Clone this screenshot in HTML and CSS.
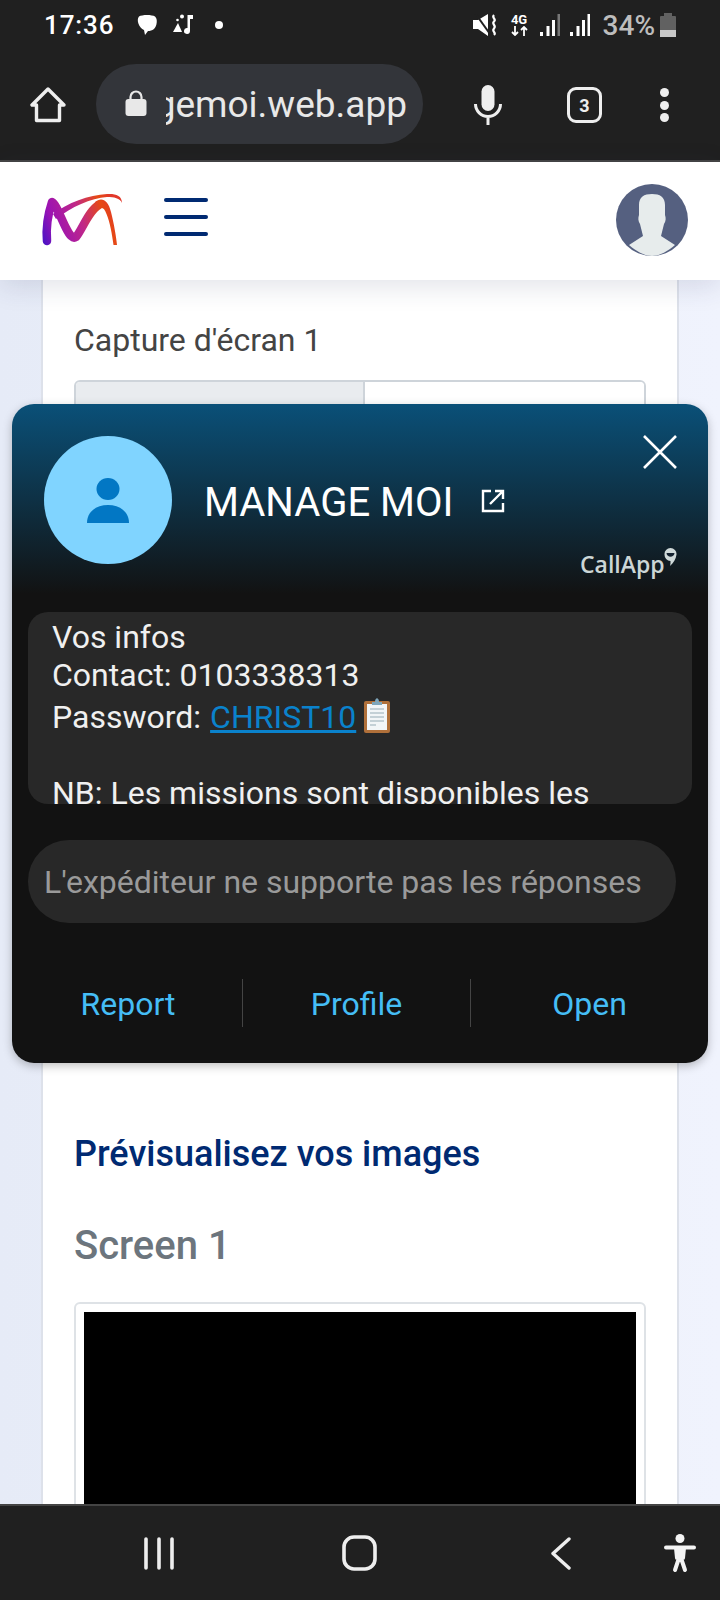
FILE: index.html
```html
<!DOCTYPE html>
<html lang="fr">
<head>
<meta charset="utf-8">
<title>Manage Moi</title>
<link rel="stylesheet" href="styles.css">
</head>
<body>
<div class="screen">
  <div class="chrome-top">
    <div class="status">
      <div class="status-left">
        <span class="time">17:36</span>
        <svg class="ic-msg" viewBox="0 0 22 22"><path d="M3 2.500C6 .5 16 .5 19 2.500 22 5 21 12 18 15c-2 1.500-4 2-6 2l-3 4-1-5C3 14 0 6 3 2.500Z" fill="#fff"/></svg>
        <svg class="ic-music" viewBox="0 0 21 22"><path d="M1 18l5-9 4 9z" fill="#fff"/><circle cx="10" cy="2.500" r="2" fill="#fff"/><circle cx="5.500" cy="6" r="1.300" fill="#fff"/><path d="M15.500 1H21v4h-3v12a3 3 0 1 1-2.500-3z" fill="#fff"/></svg>
        <span class="dot"></span>
      </div>
      <div class="status-right">
        <svg class="ic-mute" viewBox="0 0 25 22"><path d="M0 6h5L15 0v22L5 15H0z" fill="#fff"/><path d="M2-1 17 20" stroke="#202020" stroke-width="2" fill="none"/><path d="M21 1c-3 3 3 4 0 6.500s3 4 0 7 3 4 0 6.500" fill="none" stroke="#fff" stroke-width="2.200"/></svg>
        <div class="net"><span class="net-label">4G</span><svg class="net-arrows" viewBox="0 0 17 10"><path d="M4 0v9M1 6l3 3 3-3M13 10V1M10 4l3-3 3 3" fill="none" stroke="#fff" stroke-width="1.800"/></svg></div>
        <svg class="ic-signal" viewBox="0 0 21 22"><path d="M1 18h3v4H1zM7.500 12h3v10h-3zM13 6h3v16h-3z" fill="#fff"/><path d="M18.500 0H21v22h-2.500z" fill="#777"/></svg>
        <svg class="ic-signal" viewBox="0 0 21 22"><path d="M1 18h3v4H1zM7.500 12h3v10h-3zM13 6h3v16h-3zM18.500 0H21v22h-2.500z" fill="#fff"/></svg>
        <span class="pct">34%</span>
        <div class="battery"><span class="battery-cap"></span><span class="battery-body"></span><span class="battery-fill"></span></div>
      </div>
    </div>
    <div class="toolbar">
      <svg class="ic-home" viewBox="0 0 36 36"><path d="M18 2 2 18h4.500v15.500h23V18H34z" fill="none" stroke="#eee" stroke-width="3.400" stroke-linejoin="round"/></svg>
      <div class="omnibox">
        <svg class="ic-lock" viewBox="0 0 22 26"><path d="M5.500 11V7a5.500 5.500 0 0 1 11 0v4" fill="none" stroke="#e8e8e8" stroke-width="2.200"/><rect x="0.500" y="9" width="21" height="17" rx="3" fill="#e8e8e8"/></svg>
        <div class="url"><span>managemoi.web.app</span></div>
      </div>
      <svg class="ic-mic" viewBox="0 0 28 40"><rect x="7.500" y="0" width="13" height="26" rx="6.500" fill="#eee"/><path d="M1.500 19a12.500 12.500 0 0 0 25 0M14 31v9" fill="none" stroke="#eee" stroke-width="3"/></svg>
      <div class="tabs">3</div>
      <div class="menu"><span></span><span></span><span></span></div>
    </div>
  </div>

  <header class="site-header">
    <svg class="logo" viewBox="0 0 84 60">
      <defs>
        <linearGradient id="lg" gradientUnits="userSpaceOnUse" x1="4" y1="50" x2="78" y2="22">
          <stop offset="0" stop-color="#4a14c4"/>
          <stop offset=".2" stop-color="#9a12b4"/>
          <stop offset=".55" stop-color="#c02888"/>
          <stop offset=".85" stop-color="#e64a14"/>
          <stop offset="1" stop-color="#e2382a"/>
        </linearGradient>
      </defs>
      <path d="M8 49C7 38 9 22 13 10 17 12 21 24 27 36 31 44 34 47 37 45 43 38 50 18 60 13" fill="none" stroke="url(#lg)" stroke-width="8.500" stroke-linecap="round" stroke-linejoin="round"/>
      <path d="M56 10C62 5 69 7 72 20 75 32 77 44 78 53H74.500C73 42 71 30 67.500 22 65 15 62 15 58 18Z" fill="url(#lg)"/>
      <path d="M14 22C28 11 50 3 68 2 76 1.500 83 3 83 11 81 6 75 5 68 5 52 6 32 15 17 27Z" fill="url(#lg)"/>
    </svg>
    <div class="burger"><span></span><span></span><span></span></div>
    <svg class="profile" viewBox="0 0 72 72"><circle cx="36" cy="36" r="36" fill="#556080"/><path d="M36 10c8 0 13 3 13 11v10c1 3 1 6-1 9l-3 12 14 9C52 67 44 72 36 72S20 67 13 61l14-9-3-12c-2-3-2-6-1-9V21c0-8 5-11 13-11z" fill="#e7ecec"/></svg>
  </header>

  <main class="page">
    <section class="card">
      <label class="field-label">Capture d'écran 1</label>
      <div class="file-input"><span class="file-btn"></span><span class="file-name"></span></div>
      <h2 class="preview-title">Prévisualisez vos images</h2>
      <h3 class="screen-title">Screen 1</h3>
      <div class="thumb"><div class="thumb-img"></div></div>
    </section>
  </main>

  <nav class="chrome-bottom">
    <svg class="ic-recents" viewBox="0 0 31 33"><path d="M2.500 2v29M15.500 2v29M28.500 2v29" stroke="#eee" stroke-width="3.600" stroke-linecap="round"/></svg>
    <svg class="ic-square" viewBox="0 0 35 36"><rect x="2" y="2" width="31" height="32" rx="10" fill="none" stroke="#eee" stroke-width="3.600"/></svg>
    <svg class="ic-back" viewBox="0 0 20 33"><path d="M18 2 2 16.500 18 31" fill="none" stroke="#eee" stroke-width="3.400" stroke-linecap="round" stroke-linejoin="round"/></svg>
    <svg class="ic-access" viewBox="0 0 32 39"><circle cx="16" cy="4.500" r="4.500" fill="#f4f4f4"/><path d="M2 13.500h28M16 13.500v9M16 21l-5 15M16 21l5 15M12 14l1 10M20 14l-1 10" fill="none" stroke="#f4f4f4" stroke-width="4" stroke-linecap="round"/></svg>
  </nav>

  <aside class="popup">
    <div class="popup-head">
      <div class="caller-photo">
        <svg viewBox="0 0 42 45"><ellipse cx="21" cy="11" rx="11.500" ry="11" fill="#0277c4"/><path d="M0 45c0-11 9-18 21-18s21 7 21 18z" fill="#0277c4"/></svg>
      </div>
      <div class="caller-name">MANAGE MOI</div>
      <svg class="ic-ext" viewBox="0 0 24 24"><path d="M10 2H2v20h20v-8M22 10V2h-8M22 2 9 15" fill="none" stroke="#fff" stroke-width="2.400"/></svg>
      <svg class="ic-close" viewBox="0 0 34 34"><path d="M1 1l32 32M33 1 1 33" stroke="#fff" stroke-width="2.600"/></svg>
      <div class="brand"><span class="brand-name">CallApp</span>
        <svg class="brand-mark" viewBox="0 0 13 18"><path d="M6.500 0a6 6 0 0 1 6 6.500C12 11 9.500 15 6 18c.5-1.500.5-3 .5-5A6.200 6.200 0 0 1 .5 6.500 6 6 0 0 1 6.500 0Z" fill="#d0dada"/><path d="M2.500 5h8C10 10 3 10 2.500 5z" fill="#142230"/></svg>
      </div>
    </div>
    <div class="message">
      <p class="msg-line">Vos infos</p>
      <p class="msg-line">Contact: 0103338313</p>
      <p class="msg-line msg-pass">Password: <a class="msg-link">CHRIST10</a><svg class="ic-clip" viewBox="0 0 26 35"><rect x="0" y="3" width="26" height="32" rx="2" fill="#b0703a"/><rect x="3" y="6" width="20" height="26" fill="#f2f5f7"/><path d="M6 11h14M6 15h14M6 19h14M6 23h14M6 27h6" stroke="#b5c4cc" stroke-width="1.300"/><path d="M8 7V4h3c0-5 4-5 4 0h3v3z" fill="#7ea6bb"/></svg></p>
      <p class="msg-line msg-blank">&nbsp;</p>
      <p class="msg-line">NB: Les missions sont disponibles les</p>
    </div>
    <div class="reply">L'expéditeur ne supporte pas les réponses</div>
    <div class="actions">
      <span class="action">Report</span>
      <span class="action action-mid">Profile</span>
      <span class="action">Open</span>
    </div>
  </aside>
</div>
</body>
</html>
```
FILE: styles.css
```css
* { box-sizing: border-box; margin: 0; padding: 0; }
html, body { width: 720px; height: 1600px; overflow: hidden; }
body { font-family: Roboto, "Liberation Sans", sans-serif; background: #202020; }
.screen { position: relative; width: 720px; height: 1600px; display: flex; flex-direction: column; overflow: hidden; }

.chrome-top { height: 162px; flex: none; background: #202020; border-bottom: 2px solid #444; }
.status { height: 50px; display: flex; justify-content: space-between; align-items: center; padding: 0 44px 0 45px; }
.status-left, .status-right { display: flex; align-items: center; }
.time { color: #fff; font-size: 26px; letter-spacing: .9px; font-weight: 500; width: 91px; margin-left: -1px; }
.ic-msg { width: 22px; height: 22px; margin-left: 1px; }
.ic-music { width: 21px; height: 22px; margin-left: 14px; }
.dot { width: 8px; height: 8px; border-radius: 50%; background: #fff; margin-left: 22px; }
.ic-mute { width: 25px; height: 22px; margin-right: 13px; }
.net { width: 17px; height: 22px; color: #fff; font-weight: 700; display: flex; flex-direction: column; align-items: center; margin-right: 11px; }
.net-label { font-size: 13px; line-height: 12px; }
.net-arrows { width: 17px; height: 10px; }
.ic-signal { width: 21px; height: 22px; margin-right: 9px; }
.pct { color: #bdbdbd; font-size: 28px; font-weight: 500; margin: 0 5px 0 4px; }
.battery { position: relative; width: 16px; height: 24px; }
.battery-cap { position: absolute; left: 4px; top: 0; width: 8px; height: 3px; background: #616161; }
.battery-body { position: absolute; left: 0; top: 3px; width: 16px; height: 21px; background: #616161; border-radius: 1px; }
.battery-fill { position: absolute; left: 0; top: 17px; width: 16px; height: 7px; background: #c8c8c8; }

.toolbar { height: 110px; display: flex; align-items: center; padding: 0 0 0 30px; }
.ic-home { width: 36px; height: 36px; margin-right: 30px; }
.omnibox { width: 327px; height: 80px; border-radius: 40px; background: #33353a; display: flex; align-items: center; padding-left: 29px; margin-right: 51px; margin-top: -2px; }
.ic-lock { width: 22px; height: 26px; flex: none; margin-top: -2px; }
.url { width: 241px; margin-left: 19px; overflow: hidden; display: flex; justify-content: flex-end; white-space: nowrap; color: #e8e8e8; font-size: 37px; }
.ic-mic { width: 28px; height: 40px; margin-right: 65px; }
.tabs { width: 35px; height: 36px; border: 3.500px solid #eee; border-radius: 9px; color: #eee; font-size: 18px; font-weight: 700; display: flex; align-items: center; justify-content: center; margin-right: 58px; }
.menu { display: flex; flex-direction: column; gap: 3.500px; }
.menu span { width: 9px; height: 9px; border-radius: 50%; background: #eee; }

.site-header { height: 118px; flex: none; background: #fff; display: flex; align-items: center; padding: 0 32px 0 39px; position: relative; z-index: 2; box-shadow: 0 6px 26px rgba(40,50,90,.14); }
.logo { width: 84px; height: 60px; margin-top: 2px; }
.burger { display: flex; flex-direction: column; gap: 13.500px; margin: -8px 0 0 41px; }
.burger span { display: block; width: 44px; height: 3.500px; border-radius: 2px; background: #002a72; }
.profile { width: 72px; height: 72px; margin: -2px 0 0 auto; }

.page { flex: 1; min-height: 0; background: linear-gradient(90deg, #e6ebf7, #f0f3fd); padding: 0 41px; overflow: hidden; }
.card { background: #fff; border: solid #dde1ea; border-width: 0 2px; height: 100%; padding: 44px 31px 0; }
.field-label { display: block; font-size: 32px; line-height: 32px; color: #444; }
.file-input { display: flex; height: 100px; margin-top: 24px; border: 2px solid #ced4da; border-radius: 6px; overflow: hidden; }
.file-btn { width: 289px; background: #e9ecef; border-right: 2px solid #ced4da; }
.file-name { flex: 1; background: #fff; }
.preview-title { margin-top: 654px; font-size: 36px; line-height: 40px; font-weight: 500; color: #002a72; }
.screen-title { margin-top: 49px; font-size: 40px; line-height: 46px; font-weight: 500; color: #6c757d; }
.thumb { margin-top: 33px; height: 300px; border: 2px solid #dee2e6; border-radius: 6px; padding: 8px 8px 0; }
.thumb-img { height: 100%; background: #000; }

.chrome-bottom { height: 96px; flex: none; position: relative; z-index: 2; background: #202020; border-top: 2px solid #444; display: flex; align-items: center; padding: 0 24px 0 143px; }
.ic-recents { width: 32px; height: 33px; margin-right: 167px; }
.ic-square { width: 35px; height: 36px; margin-right: 174px; }
.ic-back { width: 20px; height: 33px; margin-right: 93px; }
.ic-access { width: 32px; height: 39px; }

.popup { position: absolute; z-index: 3; left: 12px; top: 404px; width: 696px; height: 659px; border-radius: 22px; background: linear-gradient(#0a5078 0, #121212 190px); box-shadow: 0 3px 10px rgba(0,0,0,.25); color: #fff; display: flex; flex-direction: column; }
.popup-head { position: relative; height: 208px; flex: none; display: flex; align-items: center; padding: 0 0 0 32px; }
.caller-photo { width: 128px; height: 128px; margin-top: -16px; border-radius: 50%; background: #80d4ff; display: flex; align-items: center; justify-content: center; flex: none; }
.caller-photo svg { width: 42px; height: 45px; }
.caller-name { margin-left: 32px; margin-top: -10px; font-size: 40px; line-height: 46px; white-space: nowrap; }
.ic-ext { width: 24px; height: 24px; margin-left: 28px; margin-top: -14px; }
.ic-close { position: absolute; width: 34px; height: 34px; top: 31px; right: 31px; }
.brand { position: absolute; left: 568px; top: 144px; display: flex; align-items: flex-start; }
.brand-name { font-family: "Open Sans", sans-serif; font-size: 23px; font-weight: 600; line-height: 30px; color: #ccd6d6; margin-top: 1px; }
.brand-mark { width: 13px; height: 18px; margin-left: -1px; }

.message { height: 192px; margin: 0 16px; border-radius: 20px; background: #282828; overflow: hidden; padding: 6px 0 0 24px; flex: none; }
.msg-line { font-size: 32px; line-height: 38px; color: #f0f0f0; white-space: nowrap; }
.msg-pass { line-height: 42px; margin-top: 2px; display: flex; align-items: center; }
.msg-pass .msg-link { margin-left: 9px; }
.msg-link { color: #0a82cc; text-decoration: underline; }
.ic-clip { width: 26px; height: 35px; margin-left: 8px; margin-top: -4px; }
.msg-blank { line-height: 36px; }
.reply { width: 648px; height: 83px; margin: 36px 0 0 16px; border-radius: 41px; background: #282828; color: #9a9a9a; font-size: 32px; line-height: 85px; padding-left: 16px; white-space: nowrap; flex: none; }
.actions { display: grid; grid-template-columns: 230px 229px 1fr; margin-top: 56px; height: 48px; }
.action { height: 48px; font-size: 32px; line-height: 50px; text-align: center; color: #45bdf5; }
.action:first-child { padding-left: 2px; }
.action-mid { border: solid #444; border-width: 0 1.500px; }
```
